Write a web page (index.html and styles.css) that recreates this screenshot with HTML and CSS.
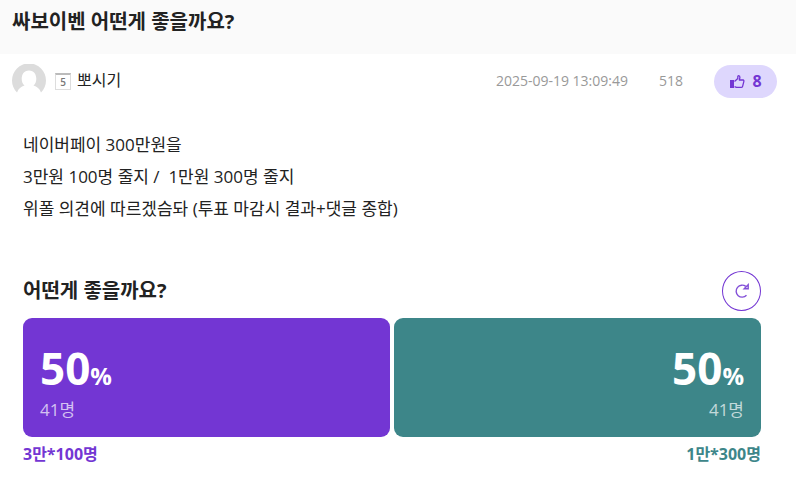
FILE: index.html
```html
<!DOCTYPE html>
<html lang="ko">
<head>
    <meta charset="UTF-8">
    <meta name="viewport" content="width=device-width, initial-scale=1.0">
    <title>싸보이벤 어떤게 좋을까요?</title>
    <link rel="stylesheet" href="styles.css">
</head>
<body>

<header class="post-header">
    <h1>싸보이벤 어떤게 좋을까요?</h1>
</header>

<div class="post-info">
    <svg class="avatar" viewBox="0 0 34 34" aria-hidden="true">
        <path fill="#dcdcdc" d="M5 28.5A17 17 0 1 1 29 28.5C27.500 24.500 25 22.500 21.500 21.500C26 18 25.500 6.500 17 6.500S8 18 12.500 21.500C9 22.500 6.500 24.500 5 28.500Z"/>
    </svg>
    <span class="level">5</span>
    <span class="author">뽀시기</span>
    <time class="date">2025-09-19 13:09:49</time>
    <span class="views">518</span>
    <button class="like-btn" type="button" aria-label="추천 8">
        <svg width="16" height="16" viewBox="0 0 16 16" aria-hidden="true">
            <path fill="#7336d3" d="M1 7h4v8H1z"/>
            <path fill="none" stroke="#7336d3" stroke-width="1.300" stroke-linejoin="round" d="M5.500 8.500L8.800 5.500V3.500Q8.800 2.600 9.600 2.600Q11 2.700 10.900 4.500L10.300 7h3.700Q15.200 7.200 14.800 8.700L13.600 13.300Q13.300 14.400 12.200 14.400H7.500L5.500 13.600"/>
        </svg>
        8
    </button>
</div>

<main class="post-body">
    <div class="content">
        <p>네이버페이 300만원을</p>
        <p>3만원 100명 줄지 /&nbsp; 1만원 300명 줄지</p>
        <p>위폴 의견에 따르겠슴돠 (투표 마감시 결과+댓글 종합)</p>
    </div>

    <section class="poll">
        <div class="poll-head">
            <h2>어떤게 좋을까요?</h2>
            <button class="refresh-btn" type="button" aria-label="새로고침">
                <svg width="16" height="16" viewBox="0 0 16 16" fill="none" stroke="#8350d8" aria-hidden="true">
                    <path stroke-width="1.400" d="M12.500 12.300A6 6 0 1 1 11.800 3.400"/>
                    <path stroke-width="1.400" d="M14.200 1.800V5.800H10.200Z"/>
                </svg>
            </button>
        </div>
        <div class="poll-result">
            <div class="option purple">
                <div class="bar">
                    <strong class="percent">50<small>%</small></strong>
                    <span class="count">41명</span>
                </div>
                <span class="label">3만*100명</span>
            </div>
            <div class="option teal">
                <div class="bar">
                    <strong class="percent">50<small>%</small></strong>
                    <span class="count">41명</span>
                </div>
                <span class="label">1만*300명</span>
            </div>
        </div>
    </section>
</main>

</body>
</html>
```

FILE: styles.css
```css
body {
    margin: 0;
    background: #fff;
    color: #222;
    font-family: "Open Sans", "Noto Sans CJK KR", sans-serif;
    font-size: 16px;
}
h1, h2, p {
    margin: 0;
}
h1, h2 {
    font-size: 20px;
    line-height: 24px;
}
button {
    font-family: inherit;
    cursor: pointer;
}
.post-header {
    padding: 10px 12px 20px;
    background: #fafafa;
}
.post-info {
    display: flex;
    align-items: center;
    height: 34px;
    padding: 10px 19px 10px 12px;
}
.avatar {
    width: 34px;
    height: 34px;
}
.level {
    box-sizing: border-box;
    width: 16px;
    height: 17px;
    margin: 0 6px 0 9px;
    border: 1px solid #ddd;
    border-top: 2px solid #bbb;
    color: #777;
    font-size: 10px;
    font-weight: 600;
    line-height: 15px;
    text-align: center;
}
.author {
    line-height: 20px;
    padding-bottom: 2px;
}
.date, .views {
    padding-bottom: 2px;
    color: #999;
    font-size: 14px;
}
.date {
    margin-left: auto;
}
.views {
    margin: 0 31px;
}
.like-btn {
    display: flex;
    align-items: center;
    justify-content: center;
    gap: 7px;
    width: 63px;
    height: 33px;
    padding: 0;
    border: none;
    border-radius: 17px;
    background: #ded7fd;
    color: #7336d3;
    font-size: 16px;
    font-weight: 700;
}
.post-body {
    padding: 21px 35px 16px 23px;
}
.content {
    font-size: 17px;
    line-height: 32px;
}
.poll {
    margin-top: 46px;
}
.poll-head {
    display: flex;
    align-items: center;
    justify-content: space-between;
    margin-bottom: 7px;
}
.refresh-btn {
    display: flex;
    align-items: center;
    justify-content: center;
    width: 39px;
    height: 40px;
    padding: 0;
    border: 1px solid #7336d3;
    border-radius: 50%;
    background: #fff;
}
.poll-result {
    display: flex;
    gap: 4px;
}
.option {
    flex: 1;
}
.bar {
    display: flex;
    flex-direction: column;
    padding: 20px 17px 16px;
    border-radius: 9px;
    color: #fff;
}
.percent {
    font-size: 44px;
    line-height: 60px;
}
.percent small {
    font-size: 24px;
    line-height: 24px;
}
.count {
    color: rgba(255, 255, 255, 0.7);
    font-size: 17px;
    line-height: 23px;
}
.label {
    display: block;
    margin-top: 5px;
    font-size: 16px;
    font-weight: 700;
    line-height: 24px;
}
.purple .bar {
    background: #7336d3;
}
.purple .label {
    color: #7336d3;
}
.teal {
    text-align: right;
}
.teal .bar {
    background: #3d8689;
}
.teal .label {
    color: #3d8689;
}
```
